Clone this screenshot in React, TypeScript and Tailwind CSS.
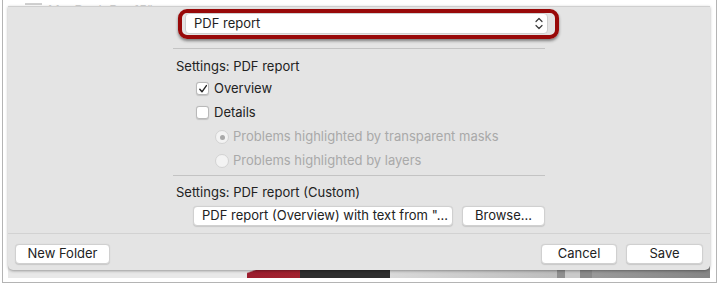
import React from 'react';

const font = { fontFamily: 'Inter, "Liberation Sans", Arial, sans-serif' };

function Updown({ className = '' }: { className?: string }) {
    return (
        <svg width="8" height="13" viewBox="0 0 8 13" className={className} fill="none" stroke="#3a3a3a" strokeWidth="1.2" strokeLinecap="round" strokeLinejoin="round">
            <path d="M1 4.5 L4 1.5 L7 4.5" />
            <path d="M1 8.5 L4 11.5 L7 8.5" />
        </svg>
    );
}

function Checkbox({ checked }: { checked?: boolean }) {
    return (
        <div className="w-[13px] h-[13px] bg-white border border-[#b9b9b9] rounded-[3px] shadow-[0_0.5px_1px_rgba(0,0,0,0.15)] flex items-center justify-center">
            {checked && (
                <svg width="10" height="10" viewBox="0 0 10 10" fill="none" stroke="#262626" strokeWidth="1.4" strokeLinecap="round" strokeLinejoin="round">
                    <path d="M1.8 5.2 L4 7.8 L8.4 1.6" />
                </svg>
            )}
        </div>
    );
}

function Radio({ selected }: { selected?: boolean }) {
    return (
        <div className="w-[14px] h-[14px] rounded-full bg-[#f3f3f3] border border-[#d2d2d2] flex items-center justify-center">
            {selected && <div className="w-[5px] h-[5px] rounded-full bg-[#a9a9a9]" />}
        </div>
    );
}

function Button({ label, w }: { label: string; w: string }) {
    return (
        <div className={`${w} h-[20px] bg-white rounded-[4px] border border-[#d0d0d0] shadow-[0_0.5px_1px_rgba(0,0,0,0.12)] flex items-center justify-center text-[13px] text-[#222]`}>
            {label}
        </div>
    );
}

export default function App() {
    return (
        <div className="w-[718px] h-[285px] bg-white relative overflow-hidden" style={font}>
            <div className="ml-[2px] w-[715px] h-[283px] border-x border-b border-[#b4b4b4] flex flex-col">
                {/* cut-off row above the dialog */}
                <div className="h-[6px] overflow-hidden flex items-end pl-[22px] gap-[6px]">
                    <div className="w-[17px] h-[2px] bg-[#d0d0d0] mb-[1px]" />
                    <div className="text-[13px] leading-[16px] text-[#d2d2d2] -mb-[12px]">MacBook Pro 15"</div>
                </div>

                {/* dialog */}
                <div className="ml-[5px] w-[702px] h-[264px] bg-[#e4e4e4] border-t border-[#cfcfcf] rounded-b-[5px] shadow-[0_1px_3px_rgba(0,0,0,0.35)] flex flex-col relative z-10">
                    {/* highlighted format popup */}
                    <div className="mt-[2px] ml-[170px] w-[381px] h-[30px] border-[4px] border-[#980909] rounded-[9px] shadow-[0_2px_3px_rgba(0,0,0,0.45)] flex items-start">
                        <div className="ml-[3px] w-[363px] h-[21px] bg-white rounded-[4px] border border-[#cfcfcf] flex items-center justify-between pl-[8px] pr-[4px] text-[13px] text-[#1e1e1e]">
                            <span>PDF report</span>
                            <Updown />
                        </div>
                    </div>

                    <div className="ml-[165px] w-[372px] flex flex-col">
                        <div className="mt-[9px] h-px bg-[#c3c3c3]" />
                        <div className="mt-[8px] h-[20px] pl-[3px] flex items-center text-[13px] text-[#222]">Settings: PDF report</div>

                        <div className="h-[23px] pl-[23px] flex items-center gap-[5px] text-[13px] text-[#222]">
                            <Checkbox checked />
                            <span>Overview</span>
                        </div>
                        <div className="h-[25px] pl-[23px] flex items-center gap-[5px] text-[13px] text-[#222]">
                            <Checkbox />
                            <span>Details</span>
                        </div>
                        <div className="h-[24px] pl-[42px] flex items-center gap-[4px] text-[13px] text-[#a9a9a9]">
                            <Radio selected />
                            <span>Problems highlighted by transparent masks</span>
                        </div>
                        <div className="h-[24px] pl-[42px] flex items-center gap-[4px] text-[13px] text-[#a9a9a9]">
                            <Radio />
                            <span>Problems highlighted by layers</span>
                        </div>

                        <div className="mt-[2px] h-px bg-[#c3c3c3]" />
                        <div className="mt-[6px] h-[22px] pl-[3px] flex items-center text-[13px] text-[#222]">Settings: PDF report (Custom)</div>

                        <div className="mt-[2px] pl-[20px] flex items-center gap-[9px]">
                            <div className="w-[260px] h-[20px] bg-white rounded-[4px] border border-[#d0d0d0] shadow-[0_0.5px_1px_rgba(0,0,0,0.12)] flex items-center justify-between pl-[8px] pr-[4px] text-[13px] text-[#222]">
                                <span className="whitespace-nowrap">PDF report (Overview) with text from "...</span>
                                <Updown />
                            </div>
                            <Button label="Browse..." w="w-[83px]" />
                        </div>
                    </div>

                    <div className="mt-[7px] h-px bg-[#d2d2d2]" />
                    <div className="mt-[10px] px-[7px] flex items-center">
                        <Button label="New Folder" w="w-[95px]" />
                        <div className="flex-1" />
                        <Button label="Cancel" w="w-[76px]" />
                        <div className="w-[9px]" />
                        <Button label="Save" w="w-[77px]" />
                    </div>
                </div>

                {/* background window peeking below the dialog */}
                <div className="-mt-[4px] h-[12px] ml-[5px] w-[702px] flex">
                    <div className="w-[239px] bg-[#e8e8e8]" />
                    <div className="w-[53px] bg-[linear-gradient(160deg,#e8e8e8_0%,#e8e8e8_20%,#9c1d2e_25%,#a3232f_100%)]" />
                    <div className="w-[90px] bg-[#2e2e2e]" />
                    <div className="w-[167px] bg-[linear-gradient(90deg,#d9d9d9,#bdbdbd)]" />
                    <div className="w-[8px] bg-[#8f8f8f]" />
                    <div className="w-[15px] bg-[#c9c9c9]" />
                    <div className="w-[12px] bg-[#8a8a8a]" />
                    <div className="flex-1 bg-[linear-gradient(90deg,#9a9a9a,#858585)]" />
                </div>
            </div>

            {/* mouse pointer */}
            <svg className="absolute left-[36px] top-[116px]" width="14" height="20" viewBox="0 0 14 20">
                <path d="M1.5 1 L1.5 15.5 L5 12.3 L7.6 18.2 L9.9 17.2 L7.4 11.5 L12.3 11.5 Z" fill="#111" stroke="#fff" strokeWidth="1.2" strokeLinejoin="round" />
            </svg>
        </div>
    );
}
